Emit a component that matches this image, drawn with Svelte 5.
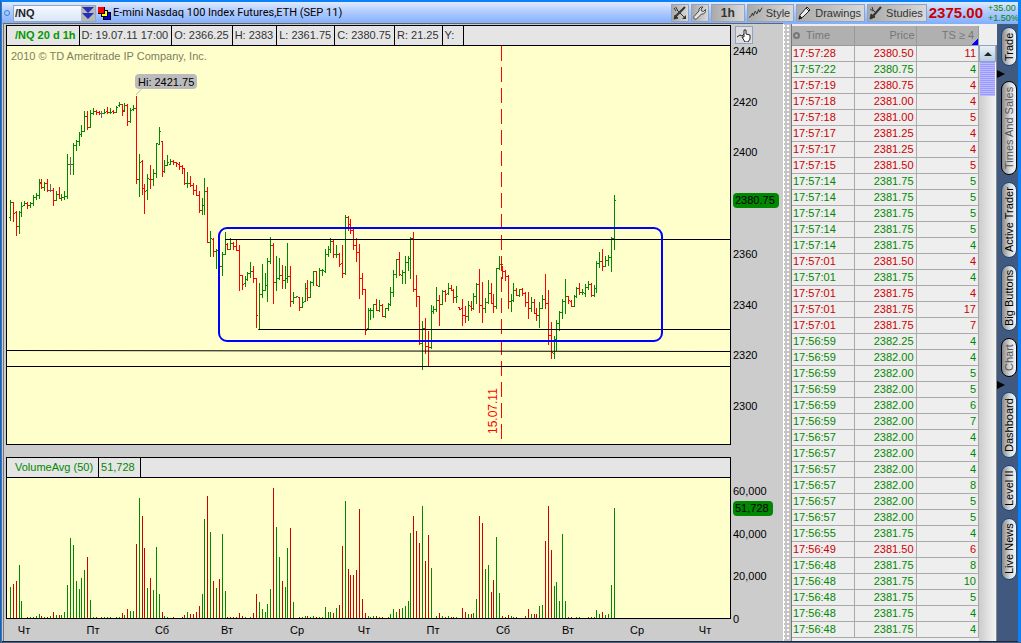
<script lang="ts">
  // x, high, low, open, close, colour (g = up, r = down, n = unchanged)
  const priceData = `
10 200 221 217 202 g;13 202 222 202 213 r;16 211 236 212 226 r;19 211 234 226 212 g;21 202 217 212 206 g;24 201 206 205 203 g;
27 202 209 203 205 r;30 202 208 205 203 g;33 195 206 203 197 g;36 193 200 197 195 g;39 179 199 195 183 g;41 179 189 182 187 r;
44 182 191 187 183 g;47 179 192 183 190 r;50 184 192 190 190 n;53 188 206 190 200 r;56 191 201 200 194 g;59 187 199 194 198 r;
61 194 201 198 197 g;64 191 200 197 196 g;67 154 199 196 164 g;70 157 175 164 164 n;73 143 175 164 145 g;76 140 151 145 141 g;
79 132 146 141 134 g;81 125 137 134 131 g;84 111 132 131 116 g;87 111 130 116 127 r;90 110 128 127 113 g;93 108 115 113 111 g;
96 110 115 111 112 r;99 111 115 112 113 r;101 111 118 113 113 n;104 109 114 113 112 g;107 107 114 111 112 r;110 108 114 112 112 g;
113 110 114 111 112 r;116 106 113 112 107 g;119 102 107 105 104 g;122 104 116 104 111 r;124 103 112 110 105 g;127 104 126 105 121 r;
130 108 123 121 110 g;133 105 111 109 108 g;136 96 184 108 179 r;139 154 197 179 162 g;142 160 195 161 188 r;144 184 214 188 191 r;
147 174 200 190 178 g;150 165 189 179 179 r;153 169 186 179 173 g;156 143 178 173 143 g;159 127 145 144 131 g;162 141 177 141 171 r;
164 160 173 171 165 g;167 155 166 165 162 g;170 159 165 164 161 g;173 160 165 161 162 r;176 162 167 162 163 r;179 162 170 164 166 r;
182 165 174 166 168 r;184 169 185 168 183 r;187 172 188 183 183 g;190 176 187 183 185 r;193 183 195 185 190 r;196 185 196 190 195 r;
199 191 213 195 210 r;202 198 215 210 205 g;204 178 215 205 191 g;207 187 243 191 242 r;210 231 257 242 238 g;213 238 257 239 251 r;
216 249 269 251 250 g;219 250 267 250 266 r;222 252 276 266 254 g;225 232 255 254 244 g;227 243 250 244 249 r;230 238 250 249 243 g;
233 242 250 243 246 r;236 240 251 246 250 r;239 245 291 250 275 r;242 275 290 275 284 r;245 276 287 283 279 g;247 272 281 279 273 g;
250 262 278 273 271 g;253 266 283 271 278 r;256 278 328 278 315 r;259 283 329 329 294 g;262 264 298 294 290 g;265 273 291 290 285 g;
267 258 302 285 261 g;270 237 264 261 245 g;273 243 304 245 282 r;276 256 291 282 278 g;279 258 280 278 275 g;282 265 289 275 280 r;
285 266 289 280 278 g;287 243 283 278 276 g;290 266 307 276 301 r;293 292 304 301 297 g;296 296 298 297 296 n;299 297 311 297 307 r;
302 297 307 307 302 g;305 283 302 301 288 g;307 280 301 288 297 r;310 281 298 297 282 g;313 271 286 282 271 g;316 271 286 271 285 r;
319 268 287 286 270 g;322 269 276 270 270 g;325 249 273 271 254 g;328 246 257 254 249 g;330 238 253 249 241 g;333 239 258 241 254 r;
336 245 258 254 254 g;339 253 267 254 264 r;342 245 278 263 273 r;345 215 275 273 217 g;348 216 231 217 224 r;350 219 234 224 230 r;
353 228 250 230 245 r;356 238 262 245 252 r;359 244 299 252 278 r;362 273 295 278 289 r;365 289 335 289 330 r;368 308 328 328 310 g;
370 308 320 310 310 g;373 304 318 310 304 g;376 299 311 304 310 r;379 300 312 310 305 g;382 304 317 305 316 r;385 308 318 316 308 g;
388 303 311 308 304 g;390 287 306 304 292 g;393 270 297 292 274 g;396 259 278 274 259 g;399 252 276 259 274 r;402 270 284 275 272 g;
405 256 284 272 262 g;408 256 271 262 258 g;410 237 279 258 238 g;413 232 292 238 289 r;416 275 307 289 296 r;419 296 345 296 343 r;
422 321 370 343 328 g;425 318 354 328 346 r;428 331 366 346 347 r;431 305 349 347 311 g;433 306 314 311 309 g;436 287 312 309 300 g;
439 295 326 300 304 r;442 290 305 304 291 g;445 290 302 291 294 r;448 283 295 293 288 g;451 285 291 288 290 r;453 289 303 290 297 r;
456 286 303 297 296 g;459 307 310 307 309 r;462 299 326 308 315 r;465 306 323 315 316 r;468 301 321 316 305 g;471 301 311 306 308 r;
473 293 310 308 296 g;476 283 304 296 284 g;479 269 313 284 305 r;482 282 323 305 308 r;485 298 313 308 302 g;488 280 304 302 293 g;
491 283 304 293 303 r;493 294 313 303 306 r;496 268 309 306 268 g;499 256 270 268 264 g;502 266 279 264 271 r;505 270 281 271 276 r;
508 275 309 276 301 r;511 294 312 301 300 g;513 283 302 300 290 g;516 288 296 290 295 r;519 289 297 295 289 g;522 288 296 289 293 r;
525 292 307 293 302 r;528 292 319 302 308 r;531 297 312 308 302 g;534 299 314 302 313 r;536 308 321 313 315 r;539 302 328 315 308 g;
542 295 309 308 299 g;545 274 309 299 303 r;548 290 345 303 335 r;551 322 359 335 352 r;554 336 359 353 339 g;556 320 351 339 323 g;
559 311 331 323 312 g;562 299 319 312 301 g;565 279 314 301 296 g;568 296 304 296 300 r;571 300 307 301 306 r;574 295 307 306 296 g;
576 287 298 296 288 g;579 283 295 288 292 r;582 289 295 292 292 g;585 284 297 293 287 g;588 281 290 287 284 g;591 283 297 284 295 r;
594 285 297 295 288 g;596 261 293 288 263 g;599 252 268 263 261 g;602 249 271 261 266 r;605 256 267 266 260 g;608 255 266 260 257 g;
611 237 272 257 238 g;614 195 250 238 200 g`;

  // x, bar height, colour
  const volumeData = `
10 31 g;13 34 r;16 37 r;19 53 g;21 17 g;27 1 r;30 1 g;33 1 g;36 2 g;39 4 g;41 2 r;44 1 g;47 1 r;50 2 g;53 6 r;56 3 g;59 3 r;61 3 g;
64 6 g;67 33 g;70 80 g;73 73 g;76 37 g;79 29 g;81 40 g;84 48 g;87 61 r;90 18 g;93 1 g;96 1 r;101 1 g;104 1 g;107 1 g;110 1 g;116 1 g;
119 1 g;122 5 r;124 3 g;127 9 r;130 7 g;133 7 g;136 74 r;139 120 g;142 102 r;144 70 r;147 30 g;150 40 r;153 28 g;156 71 g;159 24 g;
162 6 r;164 2 g;167 1 g;173 1 r;182 1 r;184 3 r;187 6 g;190 4 r;193 4 r;196 6 r;199 12 r;202 24 g;204 99 g;207 122 r;210 86 g;
213 37 r;216 30 g;219 39 r;222 84 g;225 27 g;227 1 r;230 1 r;233 1 r;236 1 r;239 5 r;242 2 r;245 1 g;250 1 g;253 5 r;256 24 r;
259 16 g;262 9 g;265 6 g;267 14 g;270 29 g;273 130 r;276 91 g;279 61 g;282 37 r;285 31 g;287 70 g;290 90 r;293 16 g;299 1 r;
302 1 g;305 2 g;307 2 r;310 1 g;313 2 g;316 1 r;319 1 g;322 1 g;325 11 g;328 6 g;330 6 g;333 5 r;336 10 g;339 13 r;342 72 r;
345 117 g;348 49 r;350 43 r;353 43 r;356 48 r;359 109 r;362 19 r;365 5 r;368 2 g;370 1 g;373 2 g;376 2 r;379 1 g;382 1 r;388 1 g;
390 4 g;393 9 g;396 6 g;399 9 r;402 10 g;405 12 g;408 17 g;410 85 g;413 102 r;416 87 r;419 75 r;422 112 g;425 57 r;428 83 r;
431 50 g;436 2 g;439 5 r;442 2 g;445 1 r;448 2 g;451 1 r;453 1 r;456 1 g;462 10 r;465 6 r;468 4 g;471 4 r;473 5 g;476 19 g;
479 102 r;482 95 r;485 49 g;488 53 g;491 26 r;493 38 r;496 81 g;499 25 g;502 2 r;505 1 r;508 3 r;511 2 g;513 1 g;516 1 r;525 2 r;
528 9 r;531 4 g;534 4 r;536 4 r;539 12 g;542 13 g;545 77 r;548 112 r;551 68 r;554 32 g;556 36 g;559 17 g;562 84 g;565 17 g;
568 1 r;571 1 r;576 1 g;579 1 g;588 1 g;591 1 r;594 1 g;596 8 g;599 4 g;602 6 r;605 3 g;608 4 g;611 33 g;614 110 g`;

  type Tone = 'g' | 'r' | 'n';

  function parse(data: string) {
    return data.trim().split(';').map(s => s.trim().split(' '));
  }

  function pricePath(tone: Tone) {
    return parse(priceData)
      .filter(b => b[5] === tone)
      .map(([x, hi, lo, o, c]) => {
        const cx = +x + 0.5;
        return `M${cx} ${hi}V${lo}M${+x - 1} ${+o + 0.5}H${cx}M${cx} ${+c + 0.5}H${+x + 2}`;
      })
      .join('');
  }

  function volumePath(tone: Tone) {
    return parse(volumeData)
      .filter(b => b[2] === tone)
      .map(([x, h]) => `M${+x + 0.5} 618v-${h}`)
      .join('');
  }

  const quote = ['D: 19.07.11 17:00', 'O: 2366.25', 'H: 2383', 'L: 2361.75', 'C: 2380.75', 'R: 21.25', 'Y:'];

  const priceAxis = [2440, 2420, 2400, 2360, 2340, 2320, 2300].map(v => ({
    v, y: Math.round(55 + (2440 - v) * 2.535),
  }));
  const volumeAxis = [['60,000', 495], ['40,000', 538], ['20,000', 580], ['0', 623]] as [string, number][];
  const days = [
    ['Чт', 24], ['Пт', 93], ['Сб', 162], ['Вт', 227], ['Ср', 297], ['Чт', 364],
    ['Пт', 433], ['Сб', 503], ['Вт', 568], ['Ср', 637], ['Чт', 705],
  ] as [string, number][];

  const trades = `
17:57:28 2380.50 11 r;17:57:22 2380.75 4 g;17:57:19 2380.75 4 r;17:57:18 2381.00 4 r;17:57:18 2381.00 5 r;17:57:17 2381.25 4 r;
17:57:17 2381.25 4 r;17:57:15 2381.50 5 r;17:57:14 2381.75 5 g;17:57:14 2381.75 5 g;17:57:14 2381.75 5 g;17:57:14 2381.75 5 g;
17:57:14 2381.75 4 g;17:57:01 2381.50 4 r;17:57:01 2381.75 4 g;17:57:01 2381.75 4 r;17:57:01 2381.75 17 r;17:57:01 2381.75 7 r;
17:56:59 2382.25 4 g;17:56:59 2382.00 4 g;17:56:59 2382.00 5 g;17:56:59 2382.00 5 g;17:56:59 2382.00 6 g;17:56:59 2382.00 7 g;
17:56:57 2382.00 4 g;17:56:57 2382.00 4 g;17:56:57 2382.00 4 g;17:56:57 2382.00 8 g;17:56:57 2382.00 5 g;17:56:57 2382.00 5 g;
17:56:55 2381.75 4 g;17:56:49 2381.50 6 r;17:56:48 2381.75 8 g;17:56:48 2381.75 10 g;17:56:48 2381.75 5 g;17:56:48 2381.75 4 g;
17:56:48 2381.75 4 g`;
  const rows = parse(trades);

  const tabs = [
    { name: 'Trade', size: 's', arrow: true },
    { name: 'Times And Sales', size: 'xl', active: true },
    { name: 'Active Trader', size: 'l' },
    { name: 'Big Buttons', size: 'm' },
    { name: 'Chart', size: 's', active: true, arrow: true },
    { name: 'Dashboard', size: 'm' },
    { name: 'Level II', size: 'xs' },
    { name: 'Live News', size: 'sm' },
  ];

  let symbol = '/NQ';
</script>

<div class="window">
  <header class="toolbar">
    <span class="dot"></span>
    <div class="combo">
      <input type="text" aria-label="Symbol" bind:value={symbol} />
      <button type="button" aria-label="Symbol list">
        <svg width="12" height="12" viewBox="0 0 12 12"><path d="M0 0h12L6 6zM0 6h12l-6 6z" fill="#2530b8" /></svg>
      </button>
    </div>
    <svg class="link" width="13" height="13" viewBox="0 0 13 13" shape-rendering="crispEdges">
      <path d="M5 5h8v8h-8z" fill="#000" /><path d="M6 6h6v6h-6z" fill="#00f" />
      <path d="M3 3h7v7h-7z" fill="#000" /><path d="M4 4h5v5h-5z" fill="#ff0" />
      <path d="M0 0h7v7h-7z" fill="#000" /><path d="M0 0h6v6h-6z" fill="#f00" />
    </svg>
    <h1>E-mini Nasdaq 100 Index Futures,ETH (SEP 11)</h1>
    <button type="button" class="tool icon" aria-label="Link studies">
      <svg width="14" height="14" viewBox="0 0 14 14" fill="none" stroke="#333">
        <path d="M1 2l2 3M2.500 1l2 3M4 4l7 7" /><path d="M12 1L3 10" stroke-width="2" /><path d="M1 13l1-4 3 3z" fill="#333" />
        <path d="M9 13h4V9z" fill="#333" stroke="none" />
      </svg>
    </button>
    <button type="button" class="tool icon" aria-label="Settings">
      <svg width="14" height="14" viewBox="0 0 14 14" fill="#e4e4e4" stroke="#444">
        <path d="M12.500 3.500l-2 2-2-.5-.5-2 2-2C7.500.5 5.500 2.500 6 5L1 10.500c-1 1.500 1 3.500 2.500 2.500L8.500 8c2.500.5 4.500-1.500 4-4.500z" />
      </svg>
    </button>
    <button type="button" class="tool period">1h</button>
    <button type="button" class="tool">
      <svg width="14" height="14" viewBox="0 0 16 14" fill="none" stroke="#222"><path d="M0 12l2-1 2-4 1 3 2-5 2 3 2-5 1 3 3-5" /></svg>
      Style
    </button>
    <button type="button" class="tool">
      <svg width="14" height="14" viewBox="0 0 14 14" stroke="#222"><path d="M1 13l1-4 7-8 3 3-7 7z" fill="#eee" /><path d="M1 13l1-3 2 2z" fill="#222" /><path d="M8 2l3 3" /></svg>
      Drawings
    </button>
    <button type="button" class="tool">
      <svg width="14" height="14" viewBox="0 0 14 14" fill="none" stroke="#333"><path d="M1 3l3 2M3 1l1 3 2 2" /><path d="M12 1L4 10" stroke-width="2" /><path d="M1 13l1-5 4 3z" fill="#333" /></svg>
      Studies
    </button>
    <strong class="last">2375.00</strong>
    <div class="change"><span>+35.00</span><span>+1.50%</span></div>
  </header>

  <main>
    <section class="charts">
      <div class="chart">
        <div class="plot">
          <div class="cells">
            <b>/NQ 20 d 1h</b>
            {#each quote as q}<span>{q}</span>{/each}
          </div>
          <svg height="398" viewBox="7 46 723 398" preserveAspectRatio="xMinYMin slice">
            <g shape-rendering="crispEdges" fill="none" stroke-width="1">
              <path class="g" d={pricePath('g')} />
              <path class="r" d={pricePath('r')} />
              <path class="n" d={pricePath('n')} />
              <path d="M501.500 46V444" class="r" stroke-dasharray="15 6" />
              <path d="M225 239.500H730M259 329.500H730M7 366.500H730" stroke="#000" />
            </g>
            <path d="M7 350.500L730 351.500" stroke="#000" />
            <rect x="219" y="228" width="443" height="113" rx="8" fill="none" stroke="#00f" stroke-width="2" />
            <path d="M136 95l8-9" stroke="#bbb" />
            <rect x="135" y="74" width="62" height="15" rx="4" fill="#bbb" />
            <text x="138" y="86">Hi: 2421.75</text>
            <text x="11" y="60" class="copy">2010 © TD Ameritrade IP Company, Inc.</text>
            <text transform="translate(497 434) rotate(-90)" class="date">15.07.11</text>
          </svg>
        </div>
        <div class="axis">
          <button type="button" class="tool hand" aria-label="Scale">
            <svg width="14" height="14" viewBox="0 0 14 14" fill="#fff" stroke="#222"><path d="M0 9l3-2 2 1 2-2" fill="none" /><path d="M7 9V2h2v4l4 1v4l-2 3H8L5 9z" /></svg>
          </button>
          <svg width="52" height="398" viewBox="731 46 52 398">
            {#each priceAxis as t}<text x="733" y={t.y}>{t.v}</text>{/each}
            <rect x="733" y="193" width="46" height="15" rx="4" fill="#080" />
            <text x="735" y="204">2380.75</text>
          </svg>
        </div>
      </div>

      <div class="chart">
        <div class="plot">
          <div class="cells volume"><span class="name">VolumeAvg (50)</span><span>51,728</span></div>
          <svg height="140" viewBox="7 478 723 140" preserveAspectRatio="xMinYMax slice" shape-rendering="crispEdges">
            <path class="g" d={volumePath('g')} />
            <path class="vr" d={volumePath('r')} />
          </svg>
        </div>
        <div class="axis">
          <svg width="52" height="150" viewBox="731 478 52 150">
            {#each volumeAxis as [v, y]}<text x="733" {y}>{v}</text>{/each}
            <rect x="733" y="501" width="40" height="15" rx="4" fill="#080" />
            <text x="735" y="512">51,728</text>
          </svg>
        </div>
      </div>
      <svg class="days" height="22" viewBox="6 619 777 22" preserveAspectRatio="xMinYMin slice">
        {#each days as [d, x]}<text {x} y="634" text-anchor="middle">{d}</text>{/each}
      </svg>
    </section>

    <div class="splitter"></div>

    <section class="sales">
      <table>
        <colgroup><col class="time" /><col class="price" /><col /></colgroup>
        <thead>
          <tr><th class="first"><i></i>Time</th><th>Price</th><th class="ts">TS ≥ 4</th></tr>
        </thead>
        <tbody>
          {#each rows as [time, price, size, tone]}
            <tr class:down={tone === 'r'}><td>{time}</td><td>{price}</td><td>{size}</td></tr>
          {/each}
        </tbody>
      </table>
      <div class="scroll">
        <button type="button" aria-label="Scroll up">
          <svg width="8" height="4" viewBox="0 0 8 4"><path d="M4 0l4 4H0z" fill="#222" /></svg>
        </button>
        <div class="thumb"></div>
      </div>
    </section>

    <nav>
      {#each tabs as tab}
        <button type="button" class="tab {tab.size}" class:active={tab.active}>{tab.name}</button>
        {#if tab.arrow}
          <svg class="arrow" width="8" height="8" viewBox="0 0 8 8"><path d="M0 0l8 4-8 4z" /></svg>
        {/if}
      {/each}
    </nav>
  </main>
</div>

<style>
  :global(body) {
    background: #4a5f7d;
  }
  .window {
    box-sizing: border-box;
    border: solid #0a80fb;
    border-width: 2px 3px 0 1px;
    border-left-color: #41597f;
    padding-left: 1px;
    background: #0a80fb;
    font: 11px/16px 'Liberation Sans', Arial, sans-serif;
    color: #000;
  }
  button, input {
    box-sizing: border-box;
    margin: 0;
    padding: 0;
    font: inherit;
    color: inherit;
  }
  svg {
    display: block;
    flex: none;
  }
  .toolbar {
    display: flex;
    align-items: center;
    gap: 2px;
    height: 22px;
    padding: 0 0 0 2px;
    background: linear-gradient(#e0eaff, #b4ceff 40%, #80aefe);
  }
  .dot {
    box-sizing: border-box;
    width: 6px;
    height: 6px;
    margin-right: 1px;
    border: 1px solid #3380d8;
    border-radius: 50%;
  }
  .combo {
    display: flex;
    width: 83px;
    height: 17px;
    border: 1px solid #8fa6c4;
    box-sizing: border-box;
    background: linear-gradient(#f4f9ff, #dbe7f8);
  }
  .combo input {
    flex: 1;
    min-width: 0;
    padding-left: 1px;
    border: 0;
    background: none;
    font-weight: bold;
    color: #222;
  }
  .combo button {
    display: grid;
    place-items: center;
    width: 14px;
    border: 0;
    background: #b8b8b8;
  }
  h1 {
    flex: 1;
    margin: 0;
    font-family: Roboto, sans-serif;
    font-size: 11px;
    font-weight: normal;
    white-space: nowrap;
  }
  .tool {
    display: flex;
    align-items: center;
    gap: 3px;
    height: 18px;
    padding: 0 3px 0 1px;
    border: 1px solid #8ea4c4;
    background: linear-gradient(90deg, #aaa, #d8d8d8);
    color: #333;
  }
  .tool.icon {
    width: 18px;
    padding: 0 1px;
  }
  .tool.period {
    width: 34px;
    justify-content: center;
    padding: 0;
    font-size: 12px;
    font-weight: bold;
  }
  .last {
    font-size: 15px;
    color: #c00;
  }
  .change {
    display: flex;
    flex-direction: column;
    width: 30px;
    margin-left: 3px;
    font-size: 9px;
    line-height: 10px;
    color: #080;
  }
  main {
    display: flex;
    border-bottom: 1px solid #1c2738;
    padding-left: 1px;
    background: #ccc;
  }
  .charts {
    flex: 1;
    min-width: 0;
    display: flex;
    flex-direction: column;
    padding: 1px 0 0 2px;
    border-top: 1px solid #666;
    border-left: 1px solid #777;
    margin-top: -1px;
  }
  .chart {
    display: flex;
  }
  .chart + .chart {
    margin-top: 12px;
    margin-bottom: -9px;
  }
  .plot {
    flex: 1;
    min-width: 0;
    box-sizing: border-box;
    border: 1px solid #000;
    background: #ffc;
  }
  .chart + .chart .plot {
    align-self: flex-start;
  }
  .plot > svg {
    width: 100%;
  }
  .cells {
    display: flex;
    height: 19px;
    align-items: stretch;
    border-bottom: 1px solid #000;
    background: #e5e5e5;
    line-height: 19px;
    color: #333;
    white-space: nowrap;
  }
  .cells > * {
    padding: 0 3px 0 2px;
    border-right: 1px solid #000;
  }
  .cells b {
    padding-left: 8px;
    color: #090;
  }
  .cells span:last-child {
    padding-right: 9px;
  }
  .cells.volume {
    color: #080;
  }
  .cells.volume span {
    padding: 0 5px 0 2px;
  }
  .cells.volume .name {
    padding-left: 8px;
  }
  .axis {
    width: 52px;
    padding-top: 21px;
  }
  .hand {
    position: absolute;
    width: 18px;
    margin: -20px 0 0 4px;
    padding: 0 1px;
    background: #ddd;
  }
  .g { stroke: #080; }
  .r { stroke: #f00; }
  .vr { stroke: #c00; }
  .n { stroke: #666; }
  .days {
    width: 100%;
  }
  .splitter {
    width: 9px;
    box-sizing: border-box;
    border-left: 1px solid #fff;
    border-right: 1px solid #777;
    background: radial-gradient(circle, #fff 1px, transparent 1px) 2px 0 / 4px 4px, #c4c4c4;
  }
  .sales {
    display: flex;
    padding-top: 2px;
    background: #eee;
  }
  table {
    align-self: flex-start;
    width: 187px;
    table-layout: fixed;
    border-collapse: collapse;
  }
  col.time { width: 62px; }
  col.price { width: 62px; }
  th, td {
    box-sizing: border-box;
    height: 16px;
    padding: 0 2px;
    line-height: 15px;
    text-align: right;
    border-right: 1px solid #aaa;
    border-bottom: 1px solid #aaa;
  }
  th {
    height: 19px;
    padding: 0 1px;
    border-color: #999;
    background: #b0b0b0;
    font-weight: normal;
    color: #777;
  }
  th.first, td:first-child {
    padding-left: 1px;
    text-align: left;
  }
  th.ts {
    padding-right: 4px;
    background: linear-gradient(135deg, transparent 50%, #00f 50%) right bottom / 7px 7px no-repeat, #b0b0b0;
  }
  th i {
    display: inline-block;
    width: 3px;
    height: 3px;
    margin-right: 6px;
    border: 2px solid #777;
    border-radius: 50%;
    vertical-align: middle;
  }
  td {
    color: #080;
  }
  .down td {
    color: #c00;
  }
  .scroll {
    width: 17px;
    margin-top: 19px;
    background: linear-gradient(90deg, #ccc, #f4f4f4);
    border-right: 1px solid #888;
  }
  .scroll button {
    display: grid;
    place-items: center;
    width: 17px;
    height: 17px;
    border: 1px solid #8ea4c4;
    background: linear-gradient(#e8f0f8, #b8cce0);
  }
  .thumb {
    height: 34px;
    margin: 0 1px;
    background: repeating-linear-gradient(#99f 0 1px, #bbf 1px 2px);
  }
  nav {
    display: flex;
    flex-direction: column;
    width: 21px;
    box-sizing: border-box;
    align-items: center;
    gap: 7px;
    padding-top: 3px;
    background: #41597f;
  }
  .tab {
    writing-mode: vertical-rl;
    transform: rotate(180deg);
    width: 16px;
    margin-left: 2px;
    border: 1px solid #0a4a88;
    border-radius: 8px;
    background: linear-gradient(90deg, #f4f4f4, #ddd 40%, #888);
    line-height: 14px;
    text-align: center;
  }
  .tab.active {
    border-color: #000;
    color: #555;
  }
  .xs { height: 46px; }
  .s { height: 39px; }
  .sm { height: 62px; }
  .m { height: 66px; }
  .l { height: 76px; }
  .xl { height: 94px; }
  .arrow {
    align-self: flex-start;
    margin: -3px 0 -4px;
  }
  text {
    font: 11px 'Liberation Sans', Arial, sans-serif;
  }
  .copy { fill: #7d7d60; }
  .date {
    font-size: 12px;
    fill: #f00;
  }
</style>
